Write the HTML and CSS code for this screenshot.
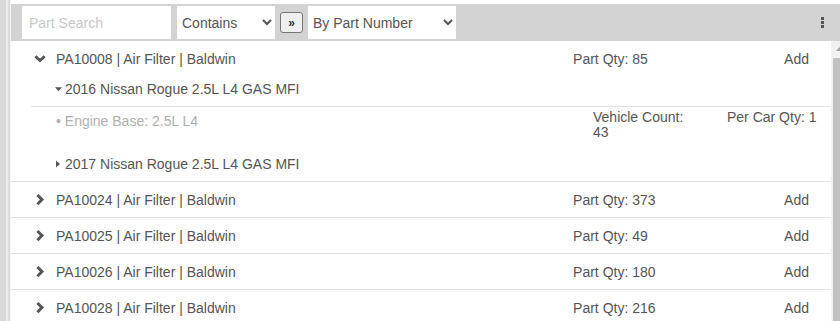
FILE: index.html
```html
<!DOCTYPE html>
<html lang="en">
<head>
  <meta charset="UTF-8">
  <title>Part Lookup</title>
  <link rel="stylesheet" href="styles.css">
</head>
<body>
  <div class="app">
    <div class="rail"></div>

    <div class="main">
      <!-- search bar -->
      <div class="toolbar">
        <input type="text" class="search" placeholder="Part Search">
        <select class="mode"><option>Contains</option></select>
        <button class="go">&raquo;</button>
        <select class="by"><option>By Part Number</option></select>
        <span class="menu"><i></i><i></i><i></i></span>
      </div>

      <div class="body">
        <div class="list">

          <div class="part">
            <div class="part-head">
              <svg class="chev" width="12" height="12" viewBox="0 0 12 12"><path d="M1.4 3.2 L6 7.6 L10.6 3.2" /></svg>
              <span class="title">PA10008 | Air Filter | Baldwin</span>
              <span class="qty">Part Qty: 85</span>
              <span class="add">Add</span>
            </div>
            <div class="apps">
              <div class="vehicle">
                <div class="vehicle-head">
                  <svg class="tri" width="8" height="8" viewBox="0 0 8 8"><path d="M1 2.2 H8 L4.5 6.2 Z" /></svg>
                  <span>2016 Nissan Rogue 2.5L L4 GAS MFI</span>
                </div>
                <div class="detail">
                  <span class="engine">&bull; Engine Base: 2.5L L4</span>
                  <span class="count">Vehicle Count: 43</span>
                  <span class="percar">Per Car Qty: 1</span>
                </div>
              </div>
              <div class="vehicle last">
                <div class="vehicle-head">
                  <svg class="tri" width="8" height="8" viewBox="0 0 8 8"><path d="M2 0.5 V7.5 L6 4 Z" /></svg>
                  <span>2017 Nissan Rogue 2.5L L4 GAS MFI</span>
                </div>
              </div>
            </div>
          </div>

          <div class="part">
            <div class="part-head">
              <svg class="chev" width="12" height="12" viewBox="0 0 12 12"><path d="M3.4 1 L8 5.6 L3.4 10.2" /></svg>
              <span class="title">PA10024 | Air Filter | Baldwin</span>
              <span class="qty">Part Qty: 373</span>
              <span class="add">Add</span>
            </div>
          </div>

          <div class="part">
            <div class="part-head">
              <svg class="chev" width="12" height="12" viewBox="0 0 12 12"><path d="M3.4 1 L8 5.6 L3.4 10.2" /></svg>
              <span class="title">PA10025 | Air Filter | Baldwin</span>
              <span class="qty">Part Qty: 49</span>
              <span class="add">Add</span>
            </div>
          </div>

          <div class="part">
            <div class="part-head">
              <svg class="chev" width="12" height="12" viewBox="0 0 12 12"><path d="M3.4 1 L8 5.6 L3.4 10.2" /></svg>
              <span class="title">PA10026 | Air Filter | Baldwin</span>
              <span class="qty">Part Qty: 180</span>
              <span class="add">Add</span>
            </div>
          </div>

          <div class="part">
            <div class="part-head">
              <svg class="chev" width="12" height="12" viewBox="0 0 12 12"><path d="M3.4 1 L8 5.6 L3.4 10.2" /></svg>
              <span class="title">PA10028 | Air Filter | Baldwin</span>
              <span class="qty">Part Qty: 216</span>
              <span class="add">Add</span>
            </div>
          </div>

        </div>

        <!-- fake scrollbar, cut off at the window edge -->
        <div class="scroll">
          <div class="scroll-inner">
            <div class="arrow"><svg width="17" height="17" viewBox="0 0 17 17"><path d="M5 10 L8.5 6 L12 10 Z" /></svg></div>
            <div class="thumb"></div>
          </div>
        </div>
      </div>
    </div>
  </div>
</body>
</html>
```

FILE: styles.css
```css
/* page */
body {
  margin: 0;
  height: 321px;
  overflow: hidden;
  background: #ffffff;
  font-family: "Liberation Sans", Arial, sans-serif;
  font-size: 14px;
  color: #555555;
}

.app {
  display: flex;
  height: 100%;
}

/* left edge panel */
.rail {
  width: 11px;
  flex: none;
  background: linear-gradient(to right, #d9d9d9 0, #d9d9d9 6px, #ececec 6px, #ececec 8px, #dcdcdc 8px, #dcdcdc 10px, #f4f4f4 10px);
}

.main {
  flex: 1;
  display: flex;
  flex-direction: column;
  padding-top: 4px;
  min-width: 0;
}

/* search bar */
.toolbar {
  height: 37px;
  flex: none;
  display: flex;
  align-items: center;
  background: #d3d3d3;
  padding-left: 11px;
  padding-right: 16px;
}

.search {
  width: 149px;
  height: 33px;
  box-sizing: border-box;
  border: none;
  outline: none;
  padding: 0 7px;
  font: 14px "Liberation Sans", Arial, sans-serif;
  color: #555555;
  background: #ffffff;
}

.search::placeholder {
  color: #c8c8c8;
}

.mode, .by {
  height: 33px;
  box-sizing: border-box;
  border: none;
  outline: none;
  background: #ffffff;
  font: 14px "Liberation Sans", Arial, sans-serif;
  color: #555555;
  padding: 0 0 0 1px;
}

.mode {
  width: 98px;
  margin-left: 6px;
}

.by {
  width: 148px;
  margin-left: 5px;
}

.go {
  width: 23px;
  height: 21px;
  margin-left: 5px;
  padding: 0;
  border: 1px solid #767676;
  border-radius: 3px;
  background: #efefef;
  font: bold 12px "Liberation Sans", Arial, sans-serif;
  color: #333333;
}

.menu {
  margin-left: auto;
  display: flex;
  flex-direction: column;
  gap: 1px;
}

.menu i {
  width: 3px;
  height: 3px;
  background: #555555;
}

/* list area */
.body {
  flex: 1;
  display: flex;
  min-height: 0;
}

.list {
  flex: 1;
  min-width: 0;
}

.part {
  border-bottom: 1px solid #e2e2e2;
}

.part-head {
  height: 35px;
  display: flex;
  align-items: center;
  padding-left: 23px;
  padding-right: 22px;
}

.chev {
  flex: none;
  margin-right: 10px;
}

.chev path {
  fill: none;
  stroke: #555555;
  stroke-width: 2.9;
}

.title {
  flex: 1;
}

.qty {
  width: 211px;
}

.apps {
  margin-left: 20px;
  padding-bottom: 1px;
}

.vehicle-head {
  height: 30px;
  box-sizing: border-box;
  padding: 5px 0 0 23px;
  line-height: 16px;
  display: flex;
  align-items: flex-start;
}

.last .vehicle-head {
  padding-top: 6px;
}

.tri {
  flex: none;
  margin: 4px 3px 0 0;
}

.tri path {
  fill: #555555;
}

.detail {
  height: 44px;
  box-sizing: border-box;
  border-top: 1px solid #e2e2e2;
  padding-top: 3px;
  display: grid;
  grid-template-columns: 1fr 134px 104px;
  line-height: 15px;
}

.engine {
  padding: 4px 0 0 25px;
  color: #b0b0b0;
}

.count {
  max-width: 100px;
}

/* scrollbar */
.scroll {
  width: 9px;
  flex: none;
  overflow: hidden;
}

.scroll-inner {
  width: 17px;
  height: 100%;
  display: flex;
  flex-direction: column;
  background: #f1f1f1;
}

.arrow svg {
  display: block;
}

.arrow path {
  fill: #a3a3a3;
}

.thumb {
  flex: 1;
  margin: 0 2px;
  background: #c1c1c1;
}
```
